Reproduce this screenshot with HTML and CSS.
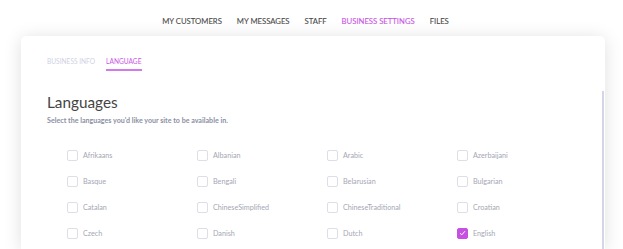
FILE: index.html
```html
<!DOCTYPE html>
<html lang="en">
<head>
    <meta charset="UTF-8">
    <meta name="viewport" content="width=device-width, initial-scale=1.0">
    <title>Business Settings - Language</title>
    <link rel="stylesheet" href="styles.css">
</head>
<body>
    <nav class="top-nav">
        <a class="nav-link">MY CUSTOMERS</a>
        <a class="nav-link">MY MESSAGES</a>
        <a class="nav-link">STAFF</a>
        <a class="nav-link active">BUSINESS SETTINGS</a>
        <a class="nav-link">FILES</a>
    </nav>

    <div class="card">
        <div class="tabs">
            <a class="tab">BUSINESS INFO</a>
            <a class="tab active">LANGUAGE</a>
        </div>

        <div class="content">
            <h1 class="title">Languages</h1>
            <p class="subtitle">Select the languages you'd like your site to be available in.</p>

            <div class="lang-grid">
                <label class="lang"><span class="box"></span>Afrikaans</label>
                <label class="lang"><span class="box"></span>Albanian</label>
                <label class="lang"><span class="box"></span>Arabic</label>
                <label class="lang"><span class="box"></span>Azerbaijani</label>
                <label class="lang"><span class="box"></span>Basque</label>
                <label class="lang"><span class="box"></span>Bengali</label>
                <label class="lang"><span class="box"></span>Belarusian</label>
                <label class="lang"><span class="box"></span>Bulgarian</label>
                <label class="lang"><span class="box"></span>Catalan</label>
                <label class="lang"><span class="box"></span>ChineseSimplified</label>
                <label class="lang"><span class="box"></span>ChineseTraditional</label>
                <label class="lang"><span class="box"></span>Croatian</label>
                <label class="lang"><span class="box"></span>Czech</label>
                <label class="lang"><span class="box"></span>Danish</label>
                <label class="lang"><span class="box"></span>Dutch</label>
                <label class="lang"><span class="box checked"><svg width="7" height="6" viewBox="0 0 7 6"><path d="M1 3.2 L2.8 4.8 L6 1.2" fill="none" stroke="#fff" stroke-width="1"/></svg></span>English</label>
            </div>
        </div>
    </div>
</body>
</html>
```

FILE: styles.css
```css
body {
    margin: 0;
    padding: 0;
    font-family: Lato, "Open Sans", sans-serif;
    background: #fff;
    height: 249px;
    overflow: hidden;
}

.top-nav {
    display: flex;
    justify-content: center;
    gap: 15px;
    padding: 15px 12px 9px 0;
    height: 12px;
}

.nav-link {
    font-size: 7.7px;
    line-height: 12px;
    font-weight: 400;
    color: #4a4a4a;
    -webkit-text-stroke: 0.1px #4a4a4a;
}

.nav-link.active {
    color: #c955e6;
    -webkit-text-stroke-color: #c955e6;
}

.card {
    margin-left: 21px;
    width: 584px;
    height: 213px;
    background: #fff;
    border-radius: 5px 5px 0 0;
    box-shadow: 0 2px 18px rgba(0, 0, 0, 0.13);
    padding-top: 20px;
    box-sizing: border-box;
    overflow: hidden;
}

.tabs {
    display: flex;
    gap: 11px;
    padding-left: 26px;
}

.tab {
    font-size: 6.6px;
    line-height: 10px;
    color: #cfd1e4;
    padding-bottom: 3px;
    border-bottom: 2px solid transparent;
}

.tab.active {
    color: #c955e6;
    border-bottom-color: #d27ae9;
}

.content {
    margin-top: 20px;
    margin-right: 1px;
    padding: 1px 0 0 26px;
    border-right: 2px solid #d4d6e8;
    height: 200px;
}

.title {
    margin: 0;
    font-size: 15.3px;
    line-height: 20px;
    font-weight: 400;
    color: #444;
}

.subtitle {
    margin: 4px 0 0;
    font-size: 7.1px;
    line-height: 10px;
    font-weight: 700;
    color: #8a90a4;
}

.lang-grid {
    display: grid;
    grid-template-columns: repeat(4, 130px);
    grid-auto-rows: 26px;
    margin-top: 16px;
    padding-left: 20px;
}

.lang {
    display: flex;
    align-items: center;
    gap: 5px;
    font-size: 7.2px;
    color: #a4a7b4;
}

.box {
    width: 11px;
    height: 11px;
    box-sizing: border-box;
    border: 1px solid #dcdee8;
    border-radius: 2px;
    display: flex;
    align-items: center;
    justify-content: center;
}

.box.checked {
    background: #c650e2;
    border-color: #c650e2;
}
```
